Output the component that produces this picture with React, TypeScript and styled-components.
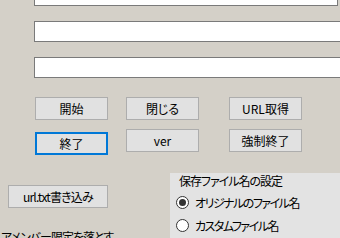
import styled, { createGlobalStyle } from "styled-components";

const GlobalStyle = createGlobalStyle`
  html, body {
    margin: 0;
    padding: 0;
    background: #d4d0c8;
  }
`;

const FONT = `"Noto Sans CJK JP", "Liberation Sans", sans-serif`;

// メイン
function App() {
  return (
    <Page>
      <GlobalStyle />
      <Fields>
        <TextBox $width={304} />
        <TextBox $width={320} />
        <TextBox $width={320} />
      </Fields>

      <ButtonGrid>
        <WinButton>開始</WinButton>
        <WinButton>閉じる</WinButton>
        <WinButton>URL取得</WinButton>
        <WinButton $focused>終了</WinButton>
        <WinButton>ver</WinButton>
        <WinButton>強制終了</WinButton>
      </ButtonGrid>

      <Bottom>
        <LeftCol>
          <WinButton $width={100} $tight>
            url.txt書き込み
          </WinButton>
          <Caption>アメンバー限定を落とす</Caption>
        </LeftCol>
        <Group>
          <GroupTitle>保存ファイル名の設定</GroupTitle>
          <RadioRow>
            <Radio $checked />
            <RadioText>オリジナルのファイル名</RadioText>
          </RadioRow>
          <RadioRow>
            <Radio />
            <RadioText>カスタムファイル名</RadioText>
          </RadioRow>
        </Group>
      </Bottom>
    </Page>
  );
}

const Page = styled.div`
  width: 340px;
  height: 238px;
  overflow: hidden;
  background: #d4d0c8;
  font-family: ${FONT};
  font-feature-settings: "palt";
  color: #000;
  display: flex;
  flex-direction: column;
`;

const Fields = styled.div`
  display: flex;
  flex-direction: column;
  gap: 15px;
  padding-left: 34px;
  margin-top: -15px;
`;

const TextBox = styled.div<{ $width: number }>`
  box-sizing: border-box;
  width: ${(p) => p.$width}px;
  height: 21px;
  flex-shrink: 0;
  background: #fff;
  border: 1px solid #7a7a7a;
`;

const ButtonGrid = styled.div`
  display: grid;
  grid-template-columns: 91px 103px 73px;
  row-gap: 9px;
  align-items: start;
  padding-left: 35px;
  margin-top: 19px;
`;

const WinButton = styled.div<{
  $focused?: boolean;
  $width?: number;
  $tight?: boolean;
}>`
  box-sizing: border-box;
  width: ${(p) => p.$width ?? 73}px;
  height: 23px;
  margin-top: ${(p) => (p.$focused ? 3 : 0)}px;
  display: flex;
  align-items: center;
  justify-content: center;
  background: #e1e1e1;
  border: ${(p) => (p.$focused ? "2px solid #0078d7" : "1px solid #adadad")};
  font-size: 12px;
  line-height: 1;
  letter-spacing: ${(p) => (p.$tight ? "-0.8px" : "0")};
  white-space: nowrap;
`;

const Bottom = styled.div`
  display: flex;
  margin-top: 18px;
  flex: 1;
`;

const LeftCol = styled.div`
  display: flex;
  flex-direction: column;
  padding-left: 8px;
  padding-top: 12px;
`;

const Caption = styled.div`
  margin-top: 22px;
  margin-left: -7px;
  font-size: 12px;
  line-height: 14px;
  letter-spacing: -1px;
  white-space: nowrap;
`;

const Group = styled.div`
  margin-left: auto;
  width: 170px;
  background: #e3e3e3;
  display: flex;
  flex-direction: column;
`;

const GroupTitle = styled.div`
  padding-left: 9px;
  height: 15px;
  line-height: 15px;
  font-size: 12px;
  letter-spacing: -1px;
  white-space: nowrap;
`;

const RadioRow = styled.div`
  display: flex;
  align-items: center;
  gap: 6px;
  height: 20px;
  padding-left: 6px;
  margin-top: 4px;
  & + & {
    margin-top: 3px;
  }
`;

const Radio = styled.span<{ $checked?: boolean }>`
  box-sizing: border-box;
  width: 13px;
  height: 13px;
  border-radius: 50%;
  border: 1px solid #333;
  background: #fff;
  display: flex;
  align-items: center;
  justify-content: center;
  &::after {
    content: "";
    width: 7px;
    height: 7px;
    border-radius: 50%;
    background: #333;
    display: ${(p) => (p.$checked ? "block" : "none")};
  }
`;

const RadioText = styled.span`
  font-size: 12px;
  letter-spacing: -1.5px;
  white-space: nowrap;
`;

export default App;
